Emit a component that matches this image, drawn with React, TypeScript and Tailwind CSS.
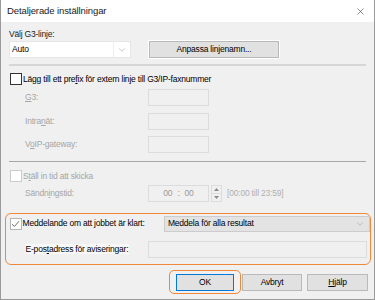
import { X, ChevronDown } from "lucide-react";

const font = { fontFamily: '"Liberation Sans", Arial, sans-serif' };

const Check = ({ checked, disabled }: { checked?: boolean; disabled?: boolean }) => (
  <span
    className={`flex h-[12px] w-[12px] shrink-0 items-center justify-center border bg-white ${
      disabled ? "border-[#cccccc]" : checked ? "border-[#b4b4b4]" : "border-[#333333]"
    }`}
  >
    {checked && (
      <svg width="9" height="8" viewBox="0 0 9 8">
        <path d="M1 4.2 L3.4 6.5 L8 1.2" fill="none" stroke="#6e6e6e" strokeWidth="1" />
      </svg>
    )}
  </span>
);

const Field = ({ className = "" }: { className?: string }) => (
  <div className={`h-[17px] border border-[#dcdcdc] bg-[#f0f0f0] ${className}`} />
);

const Btn = ({ children, className = "" }: { children: React.ReactNode; className?: string }) => (
  <div
    className={`flex h-[17px] items-center justify-center border border-[#b9b9b9] bg-[#e1e1e1] text-black ${className}`}
  >
    {children}
  </div>
);

export default function App() {
  return (
    <div
      style={font}
      className="h-[300px] w-[375px] overflow-hidden border-x border-b border-[#9a9a9a] bg-[#f0f0f0] text-[8.5px] tracking-[-0.2px] text-black"
    >
      {/* title */}
      <div className="flex h-[22px] items-center justify-between bg-white pl-[6px] pr-[8px]">
        <span className="text-[9.5px] tracking-[-0.1px] text-[#1a1a1a]">Detaljerade inställningar</span>
        <X size={11} strokeWidth={1.2} className="text-[#333]" />
      </div>

      <div className="ml-[8px] mt-[6px] flex h-[12px] items-center text-[#222]">
        Välj G3-lin<u>j</u>e:
      </div>
      <div className="mt-[1px] flex h-[17px] items-center">
        <div className="ml-[8px] flex h-[17px] w-[122px] items-center justify-between border border-[#e6e6e6] bg-white pl-[2px] pr-[3px]">
          <span>Auto</span>
          <span className="flex h-full items-center border-l border-[#eeeeee] pl-[3px]">
            <ChevronDown size={10} strokeWidth={1} className="text-[#777]" />
          </span>
        </div>
        <div className="ml-[17px] bg-white p-[1px]">
          <Btn className="w-[130px]">Anpassa linjenamn...</Btn>
        </div>
      </div>

      <div className="ml-[8px] mt-[6px] h-[2px] w-[357px] bg-[#d6d6d6]" />

      <div className="ml-[9px] mt-[6px] flex h-[14px] items-center">
        <Check />
        <span className="ml-[1px]">Lägg till ett pre<u>f</u>ix för extern linje till G3/IP-faxnummer</span>
      </div>

      <div className="mt-[3px] flex items-center text-[#a6a6a6]">
        <span className="ml-[24px] w-[123px]">
          <u>G</u>3:
        </span>
        <Field className="w-[61px]" />
      </div>
      <div className="mt-[7px] flex items-center text-[#a6a6a6]">
        <span className="ml-[24px] w-[123px]">
          Intra<u>n</u>ät:
        </span>
        <Field className="w-[61px]" />
      </div>
      <div className="mt-[6px] flex items-center text-[#a6a6a6]">
        <span className="ml-[24px] w-[123px]">
          V<u>o</u>IP-gateway:
        </span>
        <Field className="w-[61px]" />
      </div>

      <div className="ml-[8px] mt-[8px] h-[1px] w-[357px] bg-[#a8a8a8]" />

      <div className="ml-[9px] mt-[7px] flex h-[14px] items-center text-[#a6a6a6]">
        <Check disabled />
        <span className="ml-[1px]">
          S<u>t</u>äll in tid att skicka
        </span>
      </div>

      <div className="mt-[2px] flex items-center text-[#a6a6a6]">
        <span className="ml-[24px] w-[123px]">
          Sändn<u>i</u>ngstid:
        </span>
        <div className="flex h-[17px] w-[61px] items-center justify-center gap-[5px] border border-[#dcdcdc] bg-[#f0f0f0] text-[#9a9a9a]">
          <span>00</span>
          <span>:</span>
          <span>00</span>
        </div>
        <div className="ml-[2px] flex h-[17px] w-[11px] flex-col border border-[#dcdcdc]">
          <div className="flex flex-1 items-center justify-center border-b border-[#dcdcdc]">
            <svg width="5" height="3" viewBox="0 0 5 3">
              <path d="M0 3 L2.5 0 L5 3Z" fill="#8a8a8a" />
            </svg>
          </div>
          <div className="flex flex-1 items-center justify-center">
            <svg width="5" height="3" viewBox="0 0 5 3">
              <path d="M0 0 L2.5 3 L5 0Z" fill="#8a8a8a" />
            </svg>
          </div>
        </div>
        <span className="ml-[5px] text-[#b0b0b0]">[00:00 till 23:59]</span>
      </div>

      {/* highlighted section */}
      <div className="ml-[4px] mt-[11px] h-[52px] w-[366px] rounded-[6px] border-[1.5px] border-[#f0883a] pt-[1.5px]">
        <div className="flex h-[16px] items-center">
          <span className="ml-[3.5px]">
            <Check checked />
          </span>
          <span className="ml-[1px] w-[142px]">Meddelande om att jobbet är klart:</span>
          <div className="flex h-[16px] w-[207px] items-center justify-between border border-[#cccccc] bg-[#e3e3e3] pl-[3px] pr-[4px]">
            <span>Meddela för alla resultat</span>
            <ChevronDown size={10} strokeWidth={1} className="text-[#888]" />
          </div>
        </div>
        <div className="mt-[9px] flex items-center">
          <span className="ml-[18.5px] w-[123px]">
            <span className="bg-[#f8f8f8] px-[1px]">
              E-pos<u>t</u>adress för aviseringar:
            </span>
          </span>
          <Field className="w-[219px]" />
        </div>
      </div>

      {/* buttons */}
      <div className="mt-[5px] flex h-[24px] items-center">
        <div className="ml-[168px] flex h-[24px] w-[72px] items-center justify-center rounded-[5px] border-[1.5px] border-[#f0883a]">
          <div className="flex h-[17px] w-[58px] items-center justify-center border border-[#0078d7] bg-[#e1e1e1]">
            OK
          </div>
        </div>
        <Btn className="ml-[1px] w-[60px]">Avbryt</Btn>
        <Btn className="ml-[5px] w-[61px]">
          <span>
            <u>H</u>jälp
          </span>
        </Btn>
      </div>
    </div>
  );
}
